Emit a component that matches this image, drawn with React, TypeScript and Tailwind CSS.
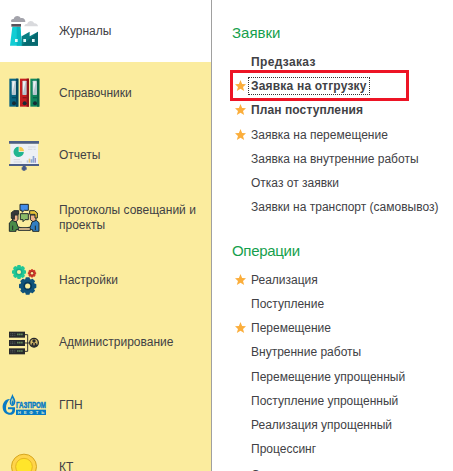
import type { ReactNode } from "react";

const Icon = ({ shift, children }: { shift: number; children: ReactNode }) => (
  <svg viewBox="0 0 144 187" className="h-[62.33px] w-12 shrink-0">
    <g transform={`translate(0 ${shift})`}>{children}</g>
  </svg>
);

const Factory = () => (
  <Icon shift={0}>
    <path d="M34 66c-3-6 2-10 7-9 2-12 18-12 21-2 8-3 15 4 14 11z" fill="#a3a3ab" />
    <path d="M73 79c0-6 5-8 9-8 3-11 18-10 20-1 7-1 12 4 12 9z" fill="#d9dadd" />
    <path d="M37 80h24l5 57H30z" fill="#12cdd4" />
    <path d="M50 80h11l5 57H50z" fill="#07b7c1" />
    <path d="M34 72h29v8H34z" fill="#58535b" />
    <path d="M65 109l24-14v14l25-14v42H65z" fill="#087f83" />
    <path d="M65 137l49-42v42z" fill="#06686f" />
    <path d="M45 117h8v9h-8zM70 117h8v9h-8zM96 117h8v9h-8z" fill="#e6fbfa" />
  </Icon>
);

const Binder = ({ x, color, dark }: { x: number; color: string; dark: string }) => (
  <g transform={`translate(${x} 237)`}>
    <rect width="27" height="84" fill={color} />
    <rect x="20" width="7" height="84" fill={dark} />
    <rect x="7" y="6" width="13" height="43" rx="2" fill="#b6c5cf" />
    <path d="M9 8h8L9 44z" fill="#edf2f4" />
    <rect x="8" y="55" width="12" height="4" fill={dark} />
    <circle cx="14" cy="74" r="6" fill="#172c36" />
  </g>
);

const Binders = () => (
  <Icon shift={-187}>
    <Binder x={28} color="#096481" dark="#034861" />
    <Binder x={60} color="#c51d20" dark="#8f1118" />
    <Binder x={91} color="#11865d" dark="#07654a" />
  </Icon>
);

const Board = () => (
  <Icon shift={-14}>
    <path d="M31 70h83v63H31z" fill="#edf0f5" />
    <path d="M27 62h90v8H27zM27 131h90v6H27z" fill="#4d5f88" />
    <path d="M68 137h9v4h3v7h-4v3h-8v-3h-3v-7h3z" fill="#465987" />
    <path d="M56 79a15.500 15.500 0 1 0 15.500 16H56z" fill="#20b590" />
    <path d="M58 79a14 14 0 0 1 14 14H58z" fill="#f6ca50" />
    <path d="M84 80h23M84 87h13M101 87h6M41 118h19M41 125h25" stroke="#c7ccd3" strokeWidth="2" />
    <path d="M80 120h5v7h-5z" fill="#b5c6dd" />
    <path d="M86 115h5v12h-5z" fill="#e8c574" />
    <path d="M92 117h5v10h-5zM98 107h5v20h-5z" fill="#8ba7d2" />
    <path d="M104 113h4v14h-4z" fill="#9b91c7" />
  </Icon>
);

const Meeting = () => (
  <Icon shift={-201}>
    <g stroke="#202b2c" strokeWidth="3" strokeLinejoin="round">
      <path d="M60 253h25v18H73l-7 6v-6h-6z" fill="#438ce8" />
      <path d="M61 281h24v18H75l-6 6v-6h-8z" fill="#8abb68" />
      <path d="M37 285h17v13l-5 7H38z" fill="#efb189" />
      <path d="M34 290v-12l8-6h14v11H43v15l-9-3z" fill="#39383c" />
      <path d="M28 334v-25l8-8 13 5 5 15 10 2v6H48v5z" fill="#488b48" />
      <path d="M91 285h17v17l-8 4-9-7z" fill="#efb189" />
      <path d="M89 283v-11h14l9 7v15h-7v-11z" fill="#e9c337" />
      <path d="M117 334v-26l-8-7-13 5-5 15-9 2v6h16v5z" fill="#317ec1" />
      <path d="M55 323h36v8H55z" fill="#ecc99a" />
      <path d="M38 317v13M106 317v13" fill="none" />
    </g>
  </Icon>
);

const Gear = ({ x, y, r, color, inner }: { x: number; y: number; r: number; color: string; inner: string }) => (
  <g transform={`translate(${x} ${y}) scale(${r / 20})`}>
    <circle r="17" fill={color} />
    {[0, 45, 90, 135].map((angle) => (
      <rect key={angle} x="-5" y="-20" width="10" height="40" rx="2" fill={color} transform={`rotate(${angle})`} />
    ))}
    <circle r="10" fill={inner} />
    <circle r="6" fill="#faed9f" />
  </g>
);

const Gears = () => (
  <Icon shift={-28}>
    <Gear x={57} y={97} r={21} color="#20c796" inner="#18ae8a" />
    <Gear x={96} y={101} r={12.5} color="#cc3928" inner="#a62420" />
    <Gear x={83} y={139} r={26} color="#10527a" inner="#073858" />
  </Icon>
);

const Servers = () => (
  <Icon shift={-215}>
    <path d="M75 283h8v50h-8M75 308h14" fill="none" stroke="#302f32" strokeWidth="3" />
    {[274, 299, 324].map((y) => (
      <g key={y}>
        <rect x="27" y={y} width="48" height="18" fill="#27292c" />
        <path d={`M31 ${y + 6}h16M31 ${y + 11}h16`} stroke="#6b7277" strokeWidth="2" strokeDasharray="3 2" />
        <path d={`M51 ${y + 8}h17`} stroke="#63865a" strokeWidth="5" strokeDasharray="5 1" />
      </g>
    ))}
    <circle cx="102" cy="307" r="13" fill="#d9bd69" stroke="#27292c" strokeWidth="4" />
    <path d="M93 317l3-9h12l4 9-9 4z" fill="#27292c" />
    <circle cx="102" cy="302" r="5" fill="#27292c" />
    <path d="M99 309h6l-3 8z" fill="#e7bd70" />
  </Icon>
);

const Gazprom = () => (
  <Icon shift={-42}>
    <path d="M30 117c-14-1-23 12-22 26 1 15 14 23 27 21 7-2 10-7 10-13v-9H24v6h13c0 7-3 11-9 10-7 0-10-6-10-14 0-11 5-20 12-27z" fill="#087bc4" />
    <path d="M37 101c2 8 10 15 9 25-1 8-5 12-9 12s-8-5-8-12c0-10 7-17 8-25z" fill="#087bc4" />
    <path d="M37 113c-6 10-6 17-1 22 7-5 7-12 1-22z" fill="#aacbb1" />
    <path d="M38 121c-4 6-4 11-1 14 5-4 5-8 1-14z" fill="#087bc4" />
    <rect x="48" y="149" width="90" height="16" fill="#087bc4" />
    <text x="48" y="143" textLength="90" lengthAdjust="spacingAndGlyphs" fill="#087bc4" stroke="#087bc4" strokeWidth="1.5" className="font-['Liberation_Sans'] text-[28px] font-bold">ГАЗПРОМ</text>
    <text x="53" y="162" textLength="80" fill="#d9e9cd" className="font-['Liberation_Sans'] text-[13px] font-bold">НЕФТЬ</text>
  </Icon>
);

const Coin = () => (
  <Icon shift={-229}>
    <circle cx="72" cy="321" r="37.500" fill="#ffd44b" stroke="#d5a51d" strokeWidth="3" />
    <circle cx="72" cy="321" r="25" fill="#ffe52b" stroke="#e5b621" strokeWidth="3" />
  </Icon>
);

const Star = () => (
  <svg viewBox="0 0 24 24" className="-mt-px h-[11px] w-[11px]">
    <path d="M12 0l3.500 8.500 8.500.5-6.500 6L20 24l-8-5-8 5 2.500-9L0 9l8.500-.5z" fill="#fbae3c" />
  </svg>
);

const sections = [
  { label: "Журналы", icon: <Factory /> },
  { label: "Справочники", icon: <Binders /> },
  { label: "Отчеты", icon: <Board /> },
  { label: "Протоколы совещаний и проекты", icon: <Meeting /> },
  { label: "Настройки", icon: <Gears /> },
  { label: "Администрирование", icon: <Servers /> },
  { label: "ГПН", icon: <Gazprom /> },
  { label: "КТ", icon: <Coin /> },
];

type Entry = { label: string; star?: boolean; weight?: string; focused?: boolean };

const requests: Entry[] = [
  { label: "Предзаказ", weight: "font-bold tracking-[0.35px]" },
  { label: "Заявка на отгрузку", weight: "font-bold tracking-[0.2px]", star: true, focused: true },
  { label: "План поступления", weight: "font-bold tracking-[0.1px]", star: true },
  { label: "Заявка на перемещение", star: true },
  { label: "Заявка на внутренние работы" },
  { label: "Отказ от заявки" },
  { label: "Заявки на транспорт (самовывоз)" },
];

const operations: Entry[] = [
  { label: "Реализация", star: true },
  { label: "Поступление" },
  { label: "Перемещение", star: true },
  { label: "Внутренние работы" },
  { label: "Перемещение упрощенный" },
  { label: "Поступление упрощенный" },
  { label: "Реализация упрощенный" },
  { label: "Процессинг" },
  { label: "Операция", weight: "mt-[3px]" },
];

const Entries = ({ items }: { items: Entry[] }) => (
  <ul>
    {items.map((item) => (
      <li key={item.label} className="relative flex h-[24.2px] items-center whitespace-nowrap">
        <span className="flex w-[16px] shrink-0 pl-[3px]">{item.star && <Star />}</span>
        <span
          className={`border border-dotted px-[2px] leading-[16px] ${item.focused ? "border-[#333]" : "border-transparent"} ${item.weight ?? ""}`}
        >
          {item.label}
        </span>
        {item.focused && <span className="absolute top-[-4px] left-[-2px] h-[31px] w-[179px] border-3 border-[#ed1425]" />}
      </li>
    ))}
  </ul>
);

export default function App() {
  return (
    <div className="flex h-[471px] w-[453px] overflow-hidden bg-white font-['Liberation_Sans',Arial,sans-serif] text-[12px] text-[#414145]">
      <nav className="w-[212px] shrink-0 border-r border-[#a0a0a0]">
        {sections.map((section, index) => (
          <div key={section.label} className={`flex h-[62.33px] items-center ${index === 0 ? "bg-white" : "bg-[#fbec9e]"}`}>
            {section.icon}
            <span className="ml-[11px] w-[145px] leading-[15px]">{section.label}</span>
          </div>
        ))}
      </nav>
      <main className="pt-[22px] pl-[20px]">
        <h2 className="mb-[6px] h-[22px] text-[15px] leading-[22px] text-[#169f4d]">Заявки</h2>
        <Entries items={requests} />
        <h2 className="mt-[20.500px] mb-[6px] h-[22px] text-[15px] leading-[22px] tracking-[-0.3px] text-[#169f4d]">Операции</h2>
        <Entries items={operations} />
      </main>
    </div>
  );
}
